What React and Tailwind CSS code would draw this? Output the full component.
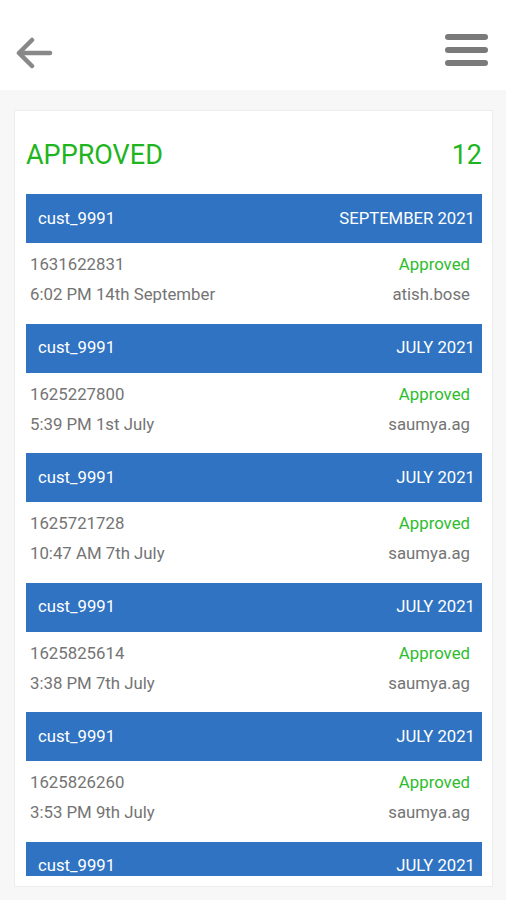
import React from "react";

const entries = [
  { id: "1631622831", time: "6:02 PM 14th September", user: "atish.bose", month: "SEPTEMBER 2021" },
  { id: "1625227800", time: "5:39 PM 1st July", user: "saumya.ag", month: "JULY 2021" },
  { id: "1625721728", time: "10:47 AM 7th July", user: "saumya.ag", month: "JULY 2021" },
  { id: "1625825614", time: "3:38 PM 7th July", user: "saumya.ag", month: "JULY 2021" },
  { id: "1625826260", time: "3:53 PM 9th July", user: "saumya.ag", month: "JULY 2021" },
  { id: "1625900000", time: "4:10 PM 10th July", user: "saumya.ag", month: "JULY 2021", last: true },
];

const App = () => {
  return (
    <div className="w-[506px] h-[900px] bg-[#f7f7f7] overflow-hidden" style={{ fontFamily: "Roboto, 'Liberation Sans', sans-serif" }}>
      {/* Header */}
      <div className="h-[90px] bg-white flex items-center justify-between pl-[15px] pr-[18px]">
        <svg width="38" height="32" viewBox="0 0 38 32" className="mt-[16px]">
          <path d="M35 16 H4 M17 3 L4 16 L17 29" fill="none" stroke="#888" strokeWidth="4.5" strokeLinecap="round" strokeLinejoin="round" />
        </svg>
        <div className="flex flex-col gap-[7px] mt-[10px]">
          <span className="block w-[43px] h-[6px] rounded-full bg-[#7a7a7a]" />
          <span className="block w-[43px] h-[6px] rounded-full bg-[#7a7a7a]" />
          <span className="block w-[43px] h-[6px] rounded-full bg-[#7a7a7a]" />
        </div>
      </div>

      {/* Card */}
      <div className="mt-[20px] ml-[14px] w-[479px] h-[777px] bg-white border border-[#ececec] flex flex-col pl-[11px] pr-[10px] pb-[10px]">
        <div className="flex items-center justify-between pt-[29px] mb-[24px] leading-[30px] text-[27px] text-[#1eb51e]">
          <span>APPROVED</span>
          <span>12</span>
        </div>
        <div className="flex-1 overflow-hidden">
          {entries.map((e, i) => (
            <div key={i}>
              <div className="h-[49px] bg-[#2f73c2] flex items-center justify-between pl-[12px] pr-[7px] text-white text-[16.7px]">
                <span>cust_9991</span>
                <span>{e.month}</span>
              </div>
              {!e.last && (
                <div className="pt-[6px] pb-[14.5px] pl-[4px] pr-[12px] text-[16.8px] leading-[30px] text-[#747474]">
                  <div className="flex justify-between">
                    <span>{e.id}</span>
                    <span className="text-[#2dbd2d]">Approved</span>
                  </div>
                  <div className="flex justify-between">
                    <span>{e.time}</span>
                    <span>{e.user}</span>
                  </div>
                </div>
              )}
            </div>
          ))}
        </div>
      </div>
    </div>
  );
};

export default App;
